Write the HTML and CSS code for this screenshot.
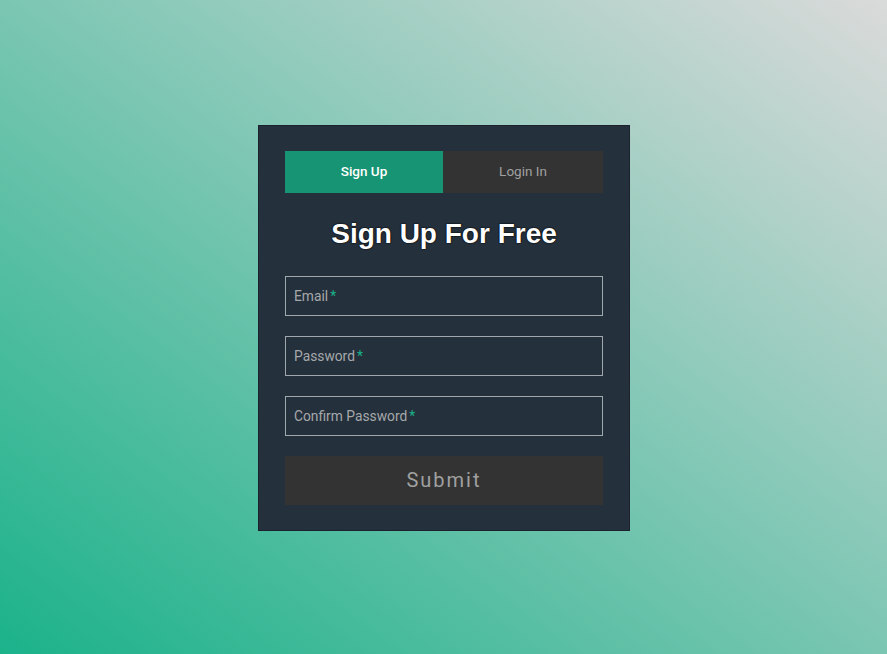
FILE: index.html
```html
<!DOCTYPE html>
<html>
<head>
<meta charset="utf-8">
<link rel="stylesheet" href="styles.css">
</head>
<body>
<div class="page">
  <div class="card">
    <div class="tabs">
      <div class="tab active">Sign Up</div>
      <div class="tab">Login In</div>
    </div>
    <h1 class="title">Sign Up For Free</h1>
    <div class="fields">
      <div class="field"><span class="label">Email<span class="req">*</span></span></div>
      <div class="field"><span class="label">Password<span class="req">*</span></span></div>
      <div class="field"><span class="label">Confirm Password<span class="req">*</span></span></div>
    </div>
    <div class="submit">Submit</div>
  </div>
</div>
</body>
</html>
```
FILE: styles.css
```css
html, body {
  margin: 0;
  padding: 0;
  height: 100%;
}
body {
  background: linear-gradient(to top right, #1bb28a, #dadada);
  font-family: Roboto, "Liberation Sans", sans-serif;
}
.page {
  height: 100%;
  display: flex;
  justify-content: center;
  align-items: flex-start;
  padding-top: 125px;
  box-sizing: border-box;
  padding-left: 1px;
}
.card {
  width: 372px;
  box-sizing: border-box;
  background: #24303c;
  border: 1px solid #1b222d;
  padding: 25px 26px 25px 26px;
}
.tabs {
  display: flex;
  height: 42px;
  background: #333;
}
.tab {
  flex: 1;
  display: flex;
  align-items: center;
  justify-content: center;
  font-size: 13.5px;
  color: #a0a0a0;
  background: #333;
  padding-bottom: 2px;
}
.tab.active {
  flex: 0 0 158px;
  background: #179473;
  color: #fff;
  font-weight: 500;
}
.title {
  margin: 23px 0 0 0;
  height: 35px;
  line-height: 35px;
  text-align: center;
  font-family: "Liberation Sans", Arial, sans-serif;
  font-weight: bold;
  font-size: 28px;
  color: #fff;
  text-shadow: 0 0 2px #000, 0 0 1px #000;
}
.fields {
  margin-top: 25px;
  display: flex;
  flex-direction: column;
  gap: 20px;
}
.field {
  height: 40px;
  box-sizing: border-box;
  border: 1px solid #a0a8ad;
  display: flex;
  align-items: center;
  padding-left: 8px;
  padding-bottom: 0;
}
.label {
  font-size: 13.8px;
  color: #a6a8aa;
}
.req {
  color: #1ab188;
  margin-left: 2px;
}
.submit {
  margin-top: 20px;
  height: 49px;
  background: #333;
  color: #a0a0a0;
  font-size: 20px;
  letter-spacing: 2px;
  display: flex;
  align-items: center;
  justify-content: center;
  padding-bottom: 2px;
  box-sizing: border-box;
}
```
